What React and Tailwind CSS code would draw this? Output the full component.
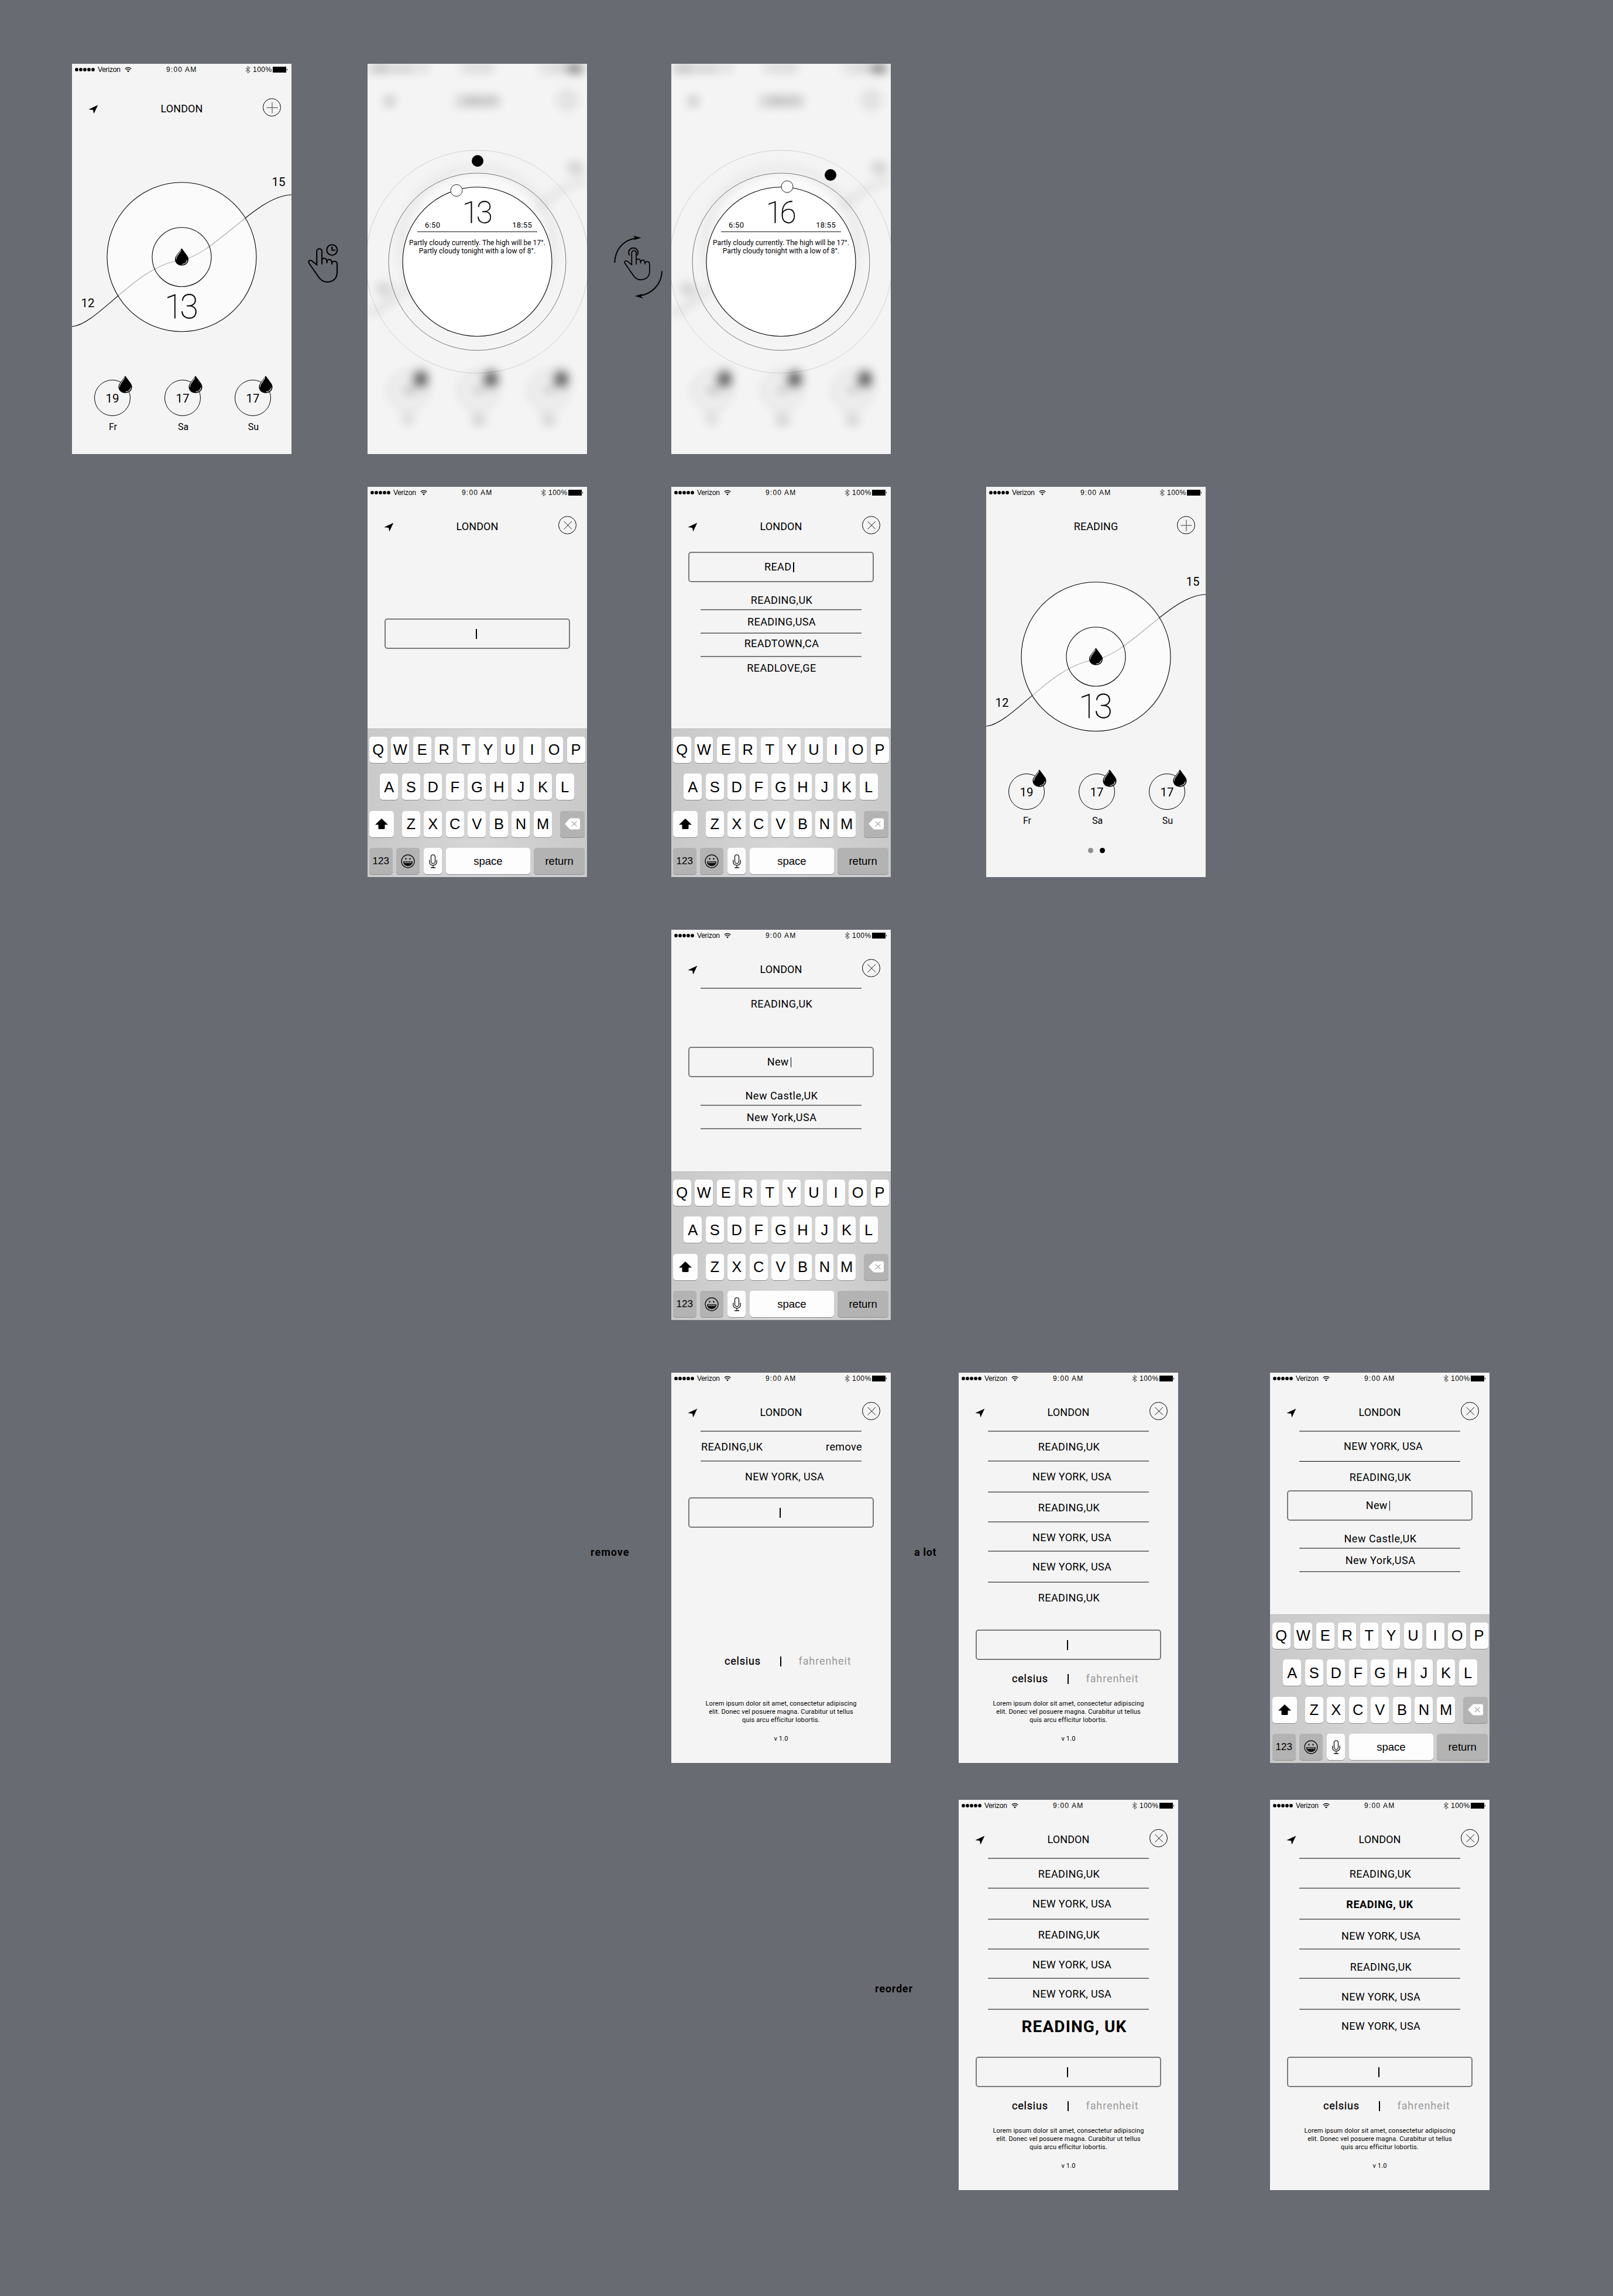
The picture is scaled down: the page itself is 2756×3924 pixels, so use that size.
import React from "react";

function StatusBar() {
  return (
    <div className="flex h-5 w-full items-center pl-[5px] font-['Liberation_Sans'] text-[12px] leading-5 text-black">
      <div className="flex w-[156px] items-center">
        <svg width="35" height="6" viewBox="0 0 35 6">
          {[3, 10, 17, 24, 31].map((x) => (
            <circle key={x} cx={x} cy="3" r="2.9" />
          ))}
        </svg>
        <span className="ml-1 tracking-[-0.2px]">Verizon</span>
        <svg className="ml-[7px]" width="12" height="10" viewBox="0 0 12 10" fill="none" stroke="#000" strokeWidth="1.3">
          <path d="M.6 3.6a7.6 7.6 0 0 1 10.8 0" />
          <path d="M2.5 5.7a5 5 0 0 1 7 0" />
          <path d="M6 9.4 4.2 7.4a2.6 2.6 0 0 1 3.6 0Z" fill="#000" stroke="none" />
        </svg>
      </div>
      <span className="w-[135px] tracking-[1.2px]">9:00 AM</span>
      <svg width="9" height="12" viewBox="0 0 9 12" fill="none" stroke="#666" strokeWidth="1.1">
        <path d="M1 3l7 6-3.700 2.600V.6L8 3.200 1 9" />
      </svg>
      <span className="ml-1 w-[34px] whitespace-nowrap tracking-[0.5px]">100%</span>
      <svg width="26" height="10" viewBox="0 0 26 10">
        <rect x=".5" y=".5" width="22" height="9" stroke="#000" />
        <path d="M24 3.200a2 2 0 0 1 0 3.600z" />
      </svg>
    </div>
  );
}

function Header({ title, arrow = true, icon = "close", className = "" }) {
  return (
    <div className={`flex h-[79px] w-full items-start ${className}`}>
      <div className="flex w-[60px] pl-7 pt-[41px]">
        {arrow && (
          <svg width="17" height="16" viewBox="0 0 17 16">
            <path d="M16.300 0.600 9.300 15.600 8 8.900.3 8Z" />
          </svg>
        )}
      </div>
      <div className="mt-[38px] h-5 flex-1 text-center text-[18px] leading-5 tracking-[0.1px]">{title}</div>
      <div className="w-[60px] pl-[11px] pt-[30px]">
        <svg width="32" height="32" viewBox="0 0 32 32" fill="none" stroke="#000">
          <circle cx="15.500" cy="15.500" r="15" />
          {icon === "plus" ? (
            <path d="M16 6.500v19M6.500 16h19" stroke="#777" strokeWidth="1.500" />
          ) : (
            <path d="M9.500 9l13.500 13.500M23 9 9.500 22.500" strokeWidth=".9" />
          )}
        </svg>
      </div>
    </div>
  );
}

function Drop({ className = "" }) {
  return (
    <svg className={className} width="24" height="30" viewBox="0 0 24 30">
      <path d="M12 .3 21 12.500C23 15.500 23.700 17.500 23.500 20 23 26 18.500 29.700 12 29.700S1 26 .5 20C.3 17.500 1 15.500 3 12.500Z" />
      <path
        d="M11 3.500 4.200 13.500C2.800 15.600 2.300 17.500 2.500 19.500M21.300 20.500C20.500 25 17 27.300 12.800 27.600"
        fill="none"
        stroke="#fff"
        strokeWidth="1.100"
      />
    </svg>
  );
}

function WeatherDial({ className = "" }) {
  return (
    <svg className={`block shrink-0 ${className}`} width="375" height="285" viewBox="0 180 375 285" fontFamily="Roboto, sans-serif">
      <g fill="none" stroke="#000" strokeWidth="1.100">
        <path d="M0 449.300C45 445 110 345 185 336 245 326 315 225 375 224" />
        <circle cx="187.500" cy="330.300" r="127.500" fill="#fff" fillOpacity=".66" />
        <circle cx="187.500" cy="330.300" r="50.500" />
      </g>
      <text x="353" y="208.500" fontSize="20.500" textAnchor="middle">15</text>
      <text x="27" y="415.500" fontSize="20.500" textAnchor="middle">12</text>
      <text x="184.500" y="434.500" fontSize="57" fontWeight="100" textAnchor="middle" letterSpacing="-5" stroke="#000" strokeWidth=".5">13</text>
      <svg x="175.500" y="315" width="24" height="30">
        <Drop />
      </svg>
    </svg>
  );
}

function Week({ className = "" }) {
  return (
    <div className={`flex pl-[38px] ${className}`}>
      {[["19", "Fr"], ["17", "Sa"], ["17", "Su"]].map(([t, d]) => (
        <div key={d} className="relative mr-[58px] w-[62px] shrink-0">
          <div className="mt-[7px] h-[62px] rounded-full border border-black text-center text-[20.5px] leading-[62px]">{t}</div>
          <div className="mt-[9px] pl-[2px] text-center text-[16px] leading-5">{d}</div>
          <Drop className="absolute left-[41px] top-0" />
        </div>
      ))}
    </div>
  );
}

function Phone({ children }) {
  return (
    <div className="relative flex h-[667px] w-[375px] shrink-0 flex-col overflow-hidden bg-[#f4f4f4] text-black">{children}</div>
  );
}

function HomeScreen() {
  return (
    <Phone>
      <StatusBar />
      <Header title="LONDON" icon="plus" className="mt-[9px]" />
      <WeatherDial className="mt-[72px]" />
      <Week className="mt-[68px]" />
    </Phone>
  );
}

function ReadingScreen() {
  return (
    <Phone>
      <StatusBar />
      <Header title="READING" icon="plus" arrow={false} />
      <WeatherDial className="mt-[41px]" />
      <Week className="mt-[58px]" />
      <div className="mt-[36px] flex gap-[11px] pl-[174px]">
        <span className="size-[9px] rounded-full bg-[#8f8f8f]" />
        <span className="size-[9px] rounded-full bg-black" />
      </div>
    </Phone>
  );
}

function DetailScreen({ temp, knobX, knobY, dotX, dotY }) {
  return (
    <Phone>
      <div className="-mt-[2px] flex h-[669px] w-[375px] shrink-0 flex-col opacity-80 blur-[9px]">
        <StatusBar />
        <Header title="LONDON" icon="plus" className="-mt-[2px]" />
        <WeatherDial className="mt-[62px]" />
        <Week className="mt-[79px]" />
      </div>
      <svg className="absolute inset-0" width="375" height="667" viewBox="0 0 375 667" fill="none">
        <circle cx="187.500" cy="338.300" r="190.500" stroke="#000" strokeOpacity=".14" />
        <circle cx="187.500" cy="338.300" r="151.500" stroke="#777" />
        <circle cx="187.500" cy="338.300" r="127.500" fill="#fff" stroke="#000" strokeWidth="1.100" />
        <circle cx={dotX} cy={dotY} r="10" fill="#000" />
        <circle cx={knobX} cy={knobY} r="10" fill="#fff" stroke="#222" />
      </svg>
      <div className="absolute left-[60px] top-[230px] w-[255px]">
        <div className="mx-[25px] flex h-[56px] items-end justify-between pl-[13px] pr-[9px]">
          <span className="pb-[2px] text-[13px] leading-4 tracking-[0.3px]">6:50</span>
          <span className="h-[56px] text-[51px] font-thin leading-[50px] tracking-[-4px] [-webkit-text-stroke:0.5px_#000]">{temp}</span>
          <span className="pb-[2px] text-[13px] leading-4 tracking-[0.3px]">18:55</span>
        </div>
        <div className="mx-[25px] h-[2px] bg-[#808080]" />
        <div className="mt-[11px] whitespace-nowrap text-center text-[12px] leading-[14px] tracking-[0.05px]">
          Partly cloudy currently. The high will be 17°.
          <br />
          Partly cloudy tonight with a low of 8°.
        </div>
      </div>
    </Phone>
  );
}

function Key({ children, className = "" }) {
  return (
    <div className={`flex h-[45px] shrink-0 items-center justify-center rounded-[5px] shadow-[0_1px_0_#8d8d8d] ${className}`}>{children}</div>
  );
}

function Letters({ text }) {
  return text.split("").map((c) => (
    <Key key={c} className="w-[31px] bg-[#fdfdfd] text-[25.5px]">{c}</Key>
  ));
}

function Keyboard({ className = "" }) {
  return (
    <div className={`mt-auto flex h-[254px] flex-col gap-[18.4px] border-t border-[#b8b8b8] bg-linear-to-r from-[#c9c9c9] via-[#d6d6d6] to-[#c9c9c9] pt-[13px] font-['Liberation_Sans'] ${className}`}>
      <div className="flex gap-[6.55px]"><Letters text="QWERTYUIOP" /></div>
      <div className="flex gap-[6.55px] pl-[18.5px]"><Letters text="ASDFGHJKL" /></div>
      <div className="flex gap-[6.55px]">
        <Key className="mr-[7.5px] w-[42px] bg-[#fdfdfd]">
          <svg width="22" height="18" viewBox="0 0 22 18"><path d="M11 0 22 10.500H16.500V16.500Q16.500 18 15 18H7Q5.500 18 5.500 16.500V10.500H0Z" /></svg>
        </Key>
        <Letters text="ZXCVBNM" />
        <Key className="ml-[7.5px] w-[42px] bg-[#b3b3b3]">
          <svg width="26" height="20" viewBox="0 0 26 20">
            <path d="M0 10 8 1.500Q9 .5 10.500 .5H23Q26 .5 26 3.500V16.500Q26 19.500 23 19.500H10.500Q9 19.500 8 18.500Z" fill="#fff" />
            <path d="M12 6l8.500 8M20.500 6 12 14" stroke="#aaa" strokeWidth="1.300" />
          </svg>
        </Key>
      </div>
      <div className="flex gap-[6.8px]">
        <Key className="w-10 bg-[#b3b3b3] text-[17px]">123</Key>
        <Key className="w-10 bg-[#b3b3b3]">
          <svg width="24" height="24" viewBox="0 0 24 24" fill="none" stroke="#111" strokeWidth="1.300">
            <circle cx="12" cy="12" r="11" />
            <path d="M4.500 13h15c-.4 4.500-3.500 6.500-7.500 6.500S4.900 17.500 4.500 13Z" fill="#111" />
            <path d="M5.500 14.200h13" stroke="#b3b3b3" strokeWidth="1.200" />
            <ellipse cx="8.500" cy="7.700" rx="1.200" ry="1.500" fill="#111" stroke="none" />
            <ellipse cx="15.500" cy="7.700" rx="1.200" ry="1.500" fill="#111" stroke="none" />
          </svg>
        </Key>
        <Key className="w-[31px] bg-[#fdfdfd]">
          <svg width="14" height="24" viewBox="0 0 14 24" fill="none" stroke="#111" strokeWidth="1.300">
            <rect x="3.500" y=".8" width="7" height="15" rx="3.500" />
            <path d="M.8 9.500v3.500C.8 16.500 3.500 18.800 7 18.800s6.200-2.300 6.200-5.800V9.500M7 18.800v4M3 23h8" />
          </svg>
        </Key>
        <Key className="w-[143.5px] bg-[#fdfdfd] text-[18.5px]">space</Key>
        <Key className="w-[86.5px] bg-[#b3b3b3] text-[18.5px]">return</Key>
      </div>
    </div>
  );
}

function Item({ children, className = "tracking-[0.4px]" }) {
  return <div className={`h-5 shrink-0 whitespace-nowrap text-center text-[18px] leading-5 ${className}`}>{children}</div>;
}

function Rule({ className = "" }) {
  return <div className={`mx-[50px] shrink-0 ${className}`} />;
}

const RULE = "h-[2px] bg-[#7c7c7c]";

function Field({ children, className = "" }) {
  return (
    <div className={`mx-[29px] flex h-[52px] shrink-0 items-center justify-center rounded-[5px] border-2 border-[#7a7a7a] text-[18px] leading-5 tracking-[0.4px] ${className}`}>
      {children}
      <span className="ml-[3px] mr-[6px] h-[17px] w-[1.500px] bg-black" />
    </div>
  );
}

function Footer({ className = "" }) {
  return (
    <>
      <div className={`flex h-5 shrink-0 items-center text-[18px] leading-5 ${className}`}>
        <span className="ml-[91px] w-[95px] tracking-[0.8px] [-webkit-text-stroke:0.3px_#000]">celsius</span>
        <span className="h-[17px] w-[1.500px] bg-black" />
        <span className="ml-[30px] tracking-[0.9px] text-[#9a9a9a]">fahrenheit</span>
      </div>
      <div className="mb-[34px] mt-auto text-center text-[11px] leading-[14px] tracking-[0.15px]">
        Lorem ipsum dolor sit amet, consectetur adipiscing
        <br />
        elit. Donec vel posuere magna. Curabitur ut tellus
        <br />
        quis arcu efficitur lobortis.
        <div className="mt-[18px]">v 1.0</div>
      </div>
    </>
  );
}

function SearchScreen({ children, keys = "pl-[2.700px]" }) {
  return (
    <Phone>
      <StatusBar />
      <Header title="LONDON" />
      {children}
      {keys && <Keyboard className={keys} />}
    </Phone>
  );
}

const UK = ["READING,UK", "pl-[2px] tracking-[0.4px]"];
const NY = ["NEW YORK, USA", "pl-[12px] tracking-[0.3px]"];

function CityList({ items }) {
  return (
    <>
      <Rule className={RULE} />
      <Item className={`mt-4 ${items[0][1]}`}>{items[0][0]}</Item>
      <Rule className={`mt-[13px] ${RULE}`} />
      <Item className={`mt-4 ${items[1][1]}`}>{items[1][0]}</Item>
      <Rule className={`mt-[15px] ${RULE}`} />
      <Item className={`mt-4 ${items[2][1]}`}>{items[2][0]}</Item>
      <Rule className={`mt-[13px] ${RULE}`} />
      <Item className={`mt-4 ${items[3][1]}`}>{items[3][0]}</Item>
      <Rule className={`mt-[12px] ${RULE}`} />
      <Item className={`mt-4 ${items[4][1]}`}>{items[4][0]}</Item>
      <Rule className={`mt-[15px] ${RULE}`} />
      <Item className={`mt-4 ${items[5][1]}`}>{items[5][0]}</Item>
      <Field className="mt-11" />
      <Footer className="mt-[22px]" />
    </>
  );
}

const HAND =
  "M24 35V12.500C24 9.500 22 8.300 19.700 8.300S15.200 9.500 15.200 12.500V35.500L7 29C4.500 27 1 28.500 1.200 31 1.300 32.500 3 34.500 4.500 36.500L16 53C20.500 60.500 26 65 32.500 65 44 65 50 57.500 50 49V34.500C50 31 47.500 29.500 45 29.500 42.500 29.500 41 31 41 35M41 33C41 28.500 39 26.500 36.500 26.500S32.500 28 32.500 33M32.500 31C32.500 26.500 30.500 24.500 28 24.500S24 26 24 29";

function HoldGesture({ className = "" }) {
  return (
    <svg className={`shrink-0 ${className}`} width="52" height="67" viewBox="0 0 52 67" fill="none" stroke="#000" strokeWidth="2.100">
      <path d={HAND} />
      <circle cx="41.300" cy="10.200" r="9" />
      <path d="M41.300 4.500V10.500H47" />
    </svg>
  );
}

function RotateGesture({ className = "" }) {
  return (
    <svg className={`shrink-0 ${className}`} width="84" height="109" viewBox="0 0 84 109" fill="none" stroke="#000" strokeWidth="2">
      <path d={HAND} transform="translate(17 19.200) scale(.877)" />
      <path d="M26.800 34.500A8 8 0 1 1 39.500 34.500" />
      <path d="M1.200 47C2 25 15 8.500 37 5.200M82 61.500C81.500 83 66 100 44 103.500" />
      <path d="M46.700 4.600 33.500 8.300 37 5 32.500.8ZM35.700 104 49.500 100 45.500 103.500 50 108Z" fill="#000" stroke="none" />
    </svg>
  );
}

function Label({ children, className = "" }) {
  return (
    <div className={`h-5 shrink-0 whitespace-nowrap text-[18px] font-bold leading-5 text-black ${className}`}>{children}</div>
  );
}

export default function App() {
  return (
    <div className="h-[3924px] w-[2756px] overflow-hidden bg-[#696b73] pt-[109px] font-['Roboto',sans-serif]">
      <div className="flex pl-[123px]">
        <HomeScreen />
        <HoldGesture className="ml-[28px] mr-[50px] mt-[308px]" />
        <DetailScreen temp="13" dotX={188} dotY={166} knobX={152} knobY={216.5} />
        <RotateGesture className="ml-[46px] mr-[14px] mt-[293px]" />
        <DetailScreen temp="16" dotX={272} dotY={190} knobX={198} knobY={210} />
      </div>

      <div className="mt-[56px] flex pl-[628px]">
        <SearchScreen>
          <Field className="mt-[126px]" />
        </SearchScreen>
        <div className="ml-[144px] mr-[163px]">
          <SearchScreen>
            <Field className="mt-3">READ</Field>
            <Item className="mt-[21px] pl-[2px] tracking-[0.4px]">READING,UK</Item>
            <Rule className={`mt-[5px] ${RULE}`} />
            <Item className="mt-[10px] pl-[2px] tracking-[0.4px]">READING,USA</Item>
            <Rule className={`mt-2 ${RULE}`} />
            <Item className="mt-[7px] pl-[2px] tracking-[0.4px]">READTOWN,CA</Item>
            <Rule className={`mt-[11px] ${RULE}`} />
            <Item className="mt-[9px] pl-[2px] tracking-[0.4px]">READLOVE,GE</Item>
          </SearchScreen>
        </div>
        <ReadingScreen />
      </div>

      <div className="mt-[90px] flex pl-[1147px]">
        <SearchScreen>
          <Rule className={RULE} />
          <Item className="mt-4 pl-[2px] tracking-[0.4px]">READING,UK</Item>
          <Field className="mt-[63px]">New</Field>
          <Item className="mt-[22px] pl-[2px] tracking-[0.5px]">New Castle,UK</Item>
          <Rule className={`mt-[5px] ${RULE}`} />
          <Item className="mt-[10px] pl-[2px] tracking-[0.5px]">New York,USA</Item>
          <Rule className={`mt-2 ${RULE}`} />
        </SearchScreen>
      </div>

      <div className="mt-[90px] flex pl-[1009px]">
        <Label className="mt-[297px] w-[138px] tracking-[1px]">remove</Label>
        <SearchScreen keys="">
          <Rule className={RULE} />
          <Item className="mt-4 flex justify-between pl-[51px] pr-[49px] tracking-[0.4px]">
            <span>READING,UK</span>
            <span>remove</span>
          </Item>
          <Rule className={`mt-[13px] ${RULE}`} />
          <Item className="mt-4 pl-[12px] tracking-[0.3px]">NEW YORK, USA</Item>
          <Field className="mt-[25px]" />
          <Footer className="mt-[218px]" />
        </SearchScreen>
        <Label className="ml-[40px] mt-[297px] w-[76px] tracking-[0.6px]">a lot</Label>
        <SearchScreen keys="">
          <CityList items={[UK, NY, UK, NY, NY, UK]} />
        </SearchScreen>
        <div className="ml-[157px]">
          <SearchScreen keys="pl-[3.700px]">
            <Rule className={RULE} />
            <Item className="mt-[15px] pl-[12px] tracking-[0.3px]">NEW YORK, USA</Item>
            <Rule className="mt-[15px] h-px bg-black" />
            <Item className="mt-[17px] pl-[2px] tracking-[0.4px]">READING,UK</Item>
            <Field className="mt-3">New</Field>
            <Item className="mt-[21px] pl-[2px] tracking-[0.5px]">New Castle,UK</Item>
            <Rule className={`mt-[5px] ${RULE}`} />
            <Item className="mt-[10px] pl-[2px] tracking-[0.5px]">New York,USA</Item>
            <Rule className={`mt-2 ${RULE}`} />
          </SearchScreen>
        </div>
      </div>

      <div className="mt-[63px] flex pl-[1495px]">
        <Label className="mt-[313px] w-[143px] tracking-[0.8px]">reorder</Label>
        <SearchScreen keys="">
          <CityList items={[UK, NY, UK, NY, NY, ["READING, UK", "pl-[20px] pt-[3px] text-[28px] font-bold tracking-[1.1px]"]]} />
        </SearchScreen>
        <div className="ml-[157px]">
          <SearchScreen keys="">
            <CityList
              items={[
                UK,
                ["READING, UK", "font-bold pt-px tracking-[0.6px]"],
                ["NEW YORK, USA", "pl-[4px] pt-[2px] tracking-[0.3px]"],
                ["READING,UK", "pl-[4px] pt-[4px] tracking-[0.4px]"],
                ["NEW YORK, USA", "pl-[4px] pt-[5px] tracking-[0.3px]"],
                ["NEW YORK, USA", "pl-[4px] pt-[2px] tracking-[0.3px]"],
              ]}
            />
          </SearchScreen>
        </div>
      </div>
    </div>
  );
}
